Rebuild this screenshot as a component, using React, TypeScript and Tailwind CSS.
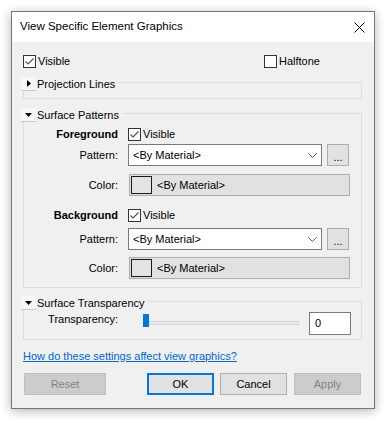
import React from 'react';

function Checkbox({ checked }: { checked?: boolean }) {
  return (
    <div className="w-[13px] h-[13px] border border-[#333333] bg-white flex items-center justify-center shrink-0">
      {checked && (
        <svg width="11" height="11" viewBox="0 0 11 11">
          <path d="M1.5 5.5 L4 8 L9.5 2.5" fill="none" stroke="#555555" strokeWidth="1.2" />
        </svg>
      )}
    </div>
  );
}

function Expander({ open }: { open?: boolean }) {
  return (
    <div className="w-[15px] h-[14px] bg-[#f7f7f7] border-b border-[#c8c8c8] flex items-center justify-center shrink-0">
      {open ? (
        <svg width="7" height="4" viewBox="0 0 7 4">
          <path d="M0 0 H7 L3.5 4 Z" fill="#000" />
        </svg>
      ) : (
        <svg width="4" height="7" viewBox="0 0 4 7">
          <path d="M0 0 V7 L4 3.5 Z" fill="#000" />
        </svg>
      )}
    </div>
  );
}

function Group({ title, open, className, children }: { title: string; open?: boolean; className?: string; children?: React.ReactNode }) {
  return (
    <div className={`relative border border-[#dcdcdc] ${className ?? ''}`}>
      <div className="absolute -top-[6px] -left-[3px] flex items-center">
        <Expander open={open} />
        <span className="bg-[#f0f0f0] pl-[1px] pr-[3px] leading-[13px]">{title}</span>
      </div>
      {children}
    </div>
  );
}

function Combo() {
  return (
    <div className="flex items-center">
      <div className="w-[194px] h-[22px] border border-[#7a7a7a] bg-white flex items-center justify-between pl-[4px] pr-[4px]">
        <span>&lt;By Material&gt;</span>
        <svg width="9" height="5" viewBox="0 0 9 5">
          <path d="M0.5 0.5 L4.5 4.5 L8.5 0.5" fill="none" stroke="#555555" strokeWidth="1" />
        </svg>
      </div>
      <div className="ml-[5px] w-[22px] h-[22px] border border-[#adadad] bg-[#e1e1e1] flex justify-center items-end pb-[3px] leading-[10px]">
        ...
      </div>
    </div>
  );
}

function ColorField() {
  return (
    <div className="ml-[1px] w-[221px] h-[22px] border border-[#adadad] bg-[#e1e1e1] flex items-center pl-[1px]">
      <div className="w-[21px] h-[18px] border border-[#1a1a1a] bg-[#e3e3e3]" />
      <span className="ml-[5px]">&lt;By Material&gt;</span>
    </div>
  );
}

function Btn({ label, variant }: { label: string; variant: 'disabled' | 'default' | 'normal' }) {
  const cls =
    variant === 'disabled'
      ? 'bg-[#cccccc] border border-[#bfbfbf] text-[#838383]'
      : variant === 'default'
      ? 'bg-[#e1e1e1] border-2 border-[#0078d7] text-black'
      : 'bg-[#e1e1e1] border border-[#adadad] text-black';
  return <div className={`h-[22px] flex items-center justify-center ${cls}`}>{label}</div>;
}

export default function App() {
  return (
    <div className="w-[384px] h-[423px] bg-white pt-[11px] pl-[11px] font-['Liberation_Sans',Arial,sans-serif] text-[11px] text-black">
      <div className="w-[364px] h-[398px] border border-[#777777] bg-[#f0f0f0] shadow-[0_2px_10px_rgba(0,0,0,0.3)] flex flex-col">
        <div className="h-[30px] bg-white flex items-center justify-between pl-[8px] pr-[9px]">
          <span className="text-[11.5px]">View Specific Element Graphics</span>
          <svg width="11" height="11" viewBox="0 0 11 11">
            <path d="M0.5 0.5 L10.5 10.5 M10.5 0.5 L0.5 10.5" stroke="#000" strokeWidth="1" />
          </svg>
        </div>

        <div className="flex flex-col pl-[11px] pr-[12px]">
          <div className="mt-[13px] h-[13px] flex items-center">
            <div className="w-[241px] flex items-center">
              <Checkbox checked />
              <span className="ml-[2px]">Visible</span>
            </div>
            <div className="flex items-center">
              <Checkbox />
              <span className="ml-[2px]">Halftone</span>
            </div>
          </div>

          <Group title="Projection Lines" className="mt-[14px] h-[17px]" />

          <Group title="Surface Patterns" open className="mt-[14px] pb-[8px]">
            <div className="mt-[14px] h-[13px] flex items-center">
              <div className="w-[94px] text-right font-bold">Foreground</div>
              <div className="ml-[10px] flex items-center">
                <Checkbox checked />
                <span className="ml-[2px]">Visible</span>
              </div>
            </div>
            <div className="mt-[3px] flex items-center">
              <div className="w-[94px] text-right">Pattern:</div>
              <div className="ml-[10px]"><Combo /></div>
            </div>
            <div className="mt-[8px] flex items-center">
              <div className="w-[94px] text-right">Color:</div>
              <div className="ml-[10px]"><ColorField /></div>
            </div>

            <div className="mt-[13px] h-[13px] flex items-center">
              <div className="w-[94px] text-right font-bold">Background</div>
              <div className="ml-[10px] flex items-center">
                <Checkbox checked />
                <span className="ml-[2px]">Visible</span>
              </div>
            </div>
            <div className="mt-[6px] flex items-center">
              <div className="w-[94px] text-right">Pattern:</div>
              <div className="ml-[10px]"><Combo /></div>
            </div>
            <div className="mt-[7px] flex items-center">
              <div className="w-[94px] text-right">Color:</div>
              <div className="ml-[10px]"><ColorField /></div>
            </div>
          </Group>

          <Group title="Surface Transparency" open className="mt-[13px] pb-[4px]">
            <div className="mt-[10px] h-[23px] flex items-start">
              <div className="w-[94px] text-right leading-[14px]">Transparency:</div>
              <div className="ml-[25px] w-[156px] h-[23px] relative flex items-center">
                <div className="w-full h-[4px] mt-[-2px] bg-[#e7e7e7] border border-[#d6d6d6]" />
                <div className="absolute left-0 top-[2px] w-[6px] h-[13px] bg-[#0078d7]" />
              </div>
              <div className="ml-[10px] w-[42px] h-[23px] border border-[#7a7a7a] bg-white flex items-center pl-[5px]">0</div>
            </div>
          </Group>

          <a className="mt-[9px] leading-[14px] text-[#0066cc] underline self-start">How do these settings affect view graphics?</a>

          <div className="mt-[10px] flex">
            <div className="ml-[1px] w-[82px]"><Btn label="Reset" variant="disabled" /></div>
            <div className="ml-[41px] w-[67px]"><Btn label="OK" variant="default" /></div>
            <div className="ml-[6px] w-[67px]"><Btn label="Cancel" variant="normal" /></div>
            <div className="ml-[7px] w-[67px]"><Btn label="Apply" variant="disabled" /></div>
          </div>
        </div>
      </div>
    </div>
  );
}
